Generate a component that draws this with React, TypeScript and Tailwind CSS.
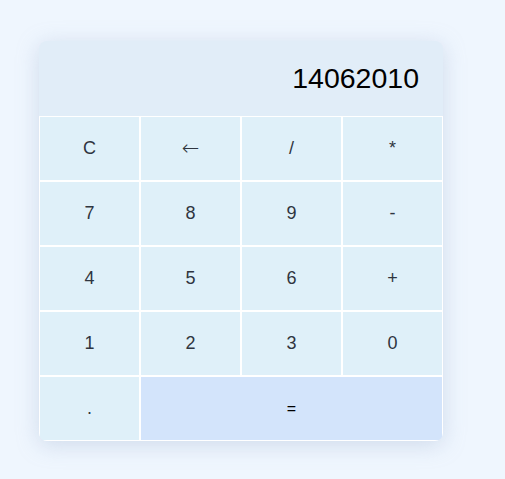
import React, { useState } from "react";

const keys = [
  "C", "←", "/", "*",
  "7", "8", "9", "-",
  "4", "5", "6", "+",
  "1", "2", "3", "0",
];

export default function App() {
  const [display, setDisplay] = useState("14062010");

  const press = (k: string) => {
    if (k === "C") return setDisplay("");
    if (k === "←") return setDisplay((d) => d.slice(0, -1));
    setDisplay((d) => d + k);
  };

  const calc = () => {
    try {
      // eslint-disable-next-line no-new-func
      setDisplay(String(Function(`return (${display})`)()));
    } catch {
      setDisplay("Error");
    }
  };

  return (
    <div
      className="min-h-[479px] w-full bg-[#eff6fe] pl-[39px] pt-[41px]"
      style={{ fontFamily: '"Liberation Sans", Arial, sans-serif' }}
    >
      <div className="w-[404px] overflow-hidden rounded-lg bg-[#e1edf8] shadow-[0_4px_22px_rgba(150,170,200,0.35)]">
        {/* Display */}
        <div className="flex h-[75px] items-center justify-end pr-[24px] text-[28.5px] text-black">
          {display}
        </div>

        {/* Keys */}
        <div className="grid grid-cols-4">
          {keys.map((k) => (
            <button
              key={k}
              onClick={() => press(k)}
              className="flex h-[65px] items-center justify-center border border-white bg-[#dff0f9] text-[18px] text-[#2f3540]"
            >
              {k === "←" ? (
                <span className="font-['DejaVu_Sans',sans-serif] text-[21px] font-light">←</span>
              ) : (
                k
              )}
            </button>
          ))}
          <button
            onClick={() => press(".")}
            className="flex h-[65px] items-center justify-center border border-white bg-[#dff0f9] text-[18px] text-[#2f3540]"
          >
            .
          </button>
          <button
            onClick={calc}
            className="col-span-3 flex h-[65px] items-center justify-center border border-white bg-[#d3e4fb] text-[16px] text-black"
          >
            =
          </button>
        </div>
      </div>
    </div>
  );
}
